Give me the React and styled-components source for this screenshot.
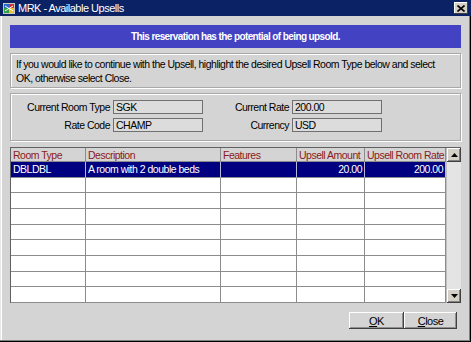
import React from "react";
import styled, { createGlobalStyle } from "styled-components";

const Global = createGlobalStyle`
  html, body { margin: 0; padding: 0; background: #d4d4d4; }
  body { font-family: "Liberation Sans", Arial, sans-serif; font-size: 10.5px; letter-spacing: -0.5px; }
  * { box-sizing: border-box; }
`;

const Window = styled.div`
  width: 471px;
  height: 342px;
  background: #d4d4d4;
  display: flex;
  flex-direction: column;
  padding: 0 10px 0 10px;
  box-shadow: inset -1px -1px 0 #000, inset -2px -2px 0 #808080, inset 1px 0 0 #e8e8e8, inset 2px 0 0 #fff;
  color: #000;
`;

const TitleBar = styled.div`
  height: 16px;
  margin: 0 -10px;
  background: #0b2264;
  display: flex;
  align-items: center;
  padding: 0 3px 0 2px;
  color: #fff;
  font-size: 11px;
`;

const TitleText = styled.span`
  margin-left: 2px;
  flex: 1;
`;

const CloseBox = styled.div`
  width: 14px;
  height: 12px;
  background: #d4d0c8;
  box-shadow: inset -1px -1px 0 #404040, inset 1px 1px 0 #fff;
  display: flex;
  align-items: center;
  justify-content: center;
`;

const Banner = styled.div`
  margin-top: 9px;
  height: 23px;
  background: #4242c2;
  color: #fff;
  font-weight: bold;
  font-size: 10px;
  letter-spacing: -0.6px;
  display: flex;
  align-items: center;
  justify-content: center;
`;

const Panel = styled.div`
  margin-top: ${(p) => p.$gap}px;
  height: ${(p) => p.$h}px;
  border: 1px solid #a8a8a8;
  box-shadow: inset 1px 1px 0 #fff, 1px 1px 0 #fff;
`;

const Instructions = styled(Panel)`
  padding: 3px 5px;
  line-height: 14px;
`;

const InfoGrid = styled(Panel)`
  display: grid;
  grid-template-columns: 99px 90px 83px 90px;
  grid-auto-rows: 14px;
  column-gap: 3px;
  row-gap: 4px;
  padding-top: 6px;
  align-items: center;
`;

const Label = styled.div`
  text-align: right;
  white-space: nowrap;
`;

const Field = styled.div`
  height: 14px;
  border: 1px solid #707070;
  background: #dcdcdc;
  padding: 0 2px;
  line-height: 12px;
`;

const TableWrap = styled.div`
  margin-top: 6px;
  height: 156px;
  display: flex;
  border-top: 1px solid #606060;
  border-left: 1px solid #606060;
`;

const Grid = styled.div`
  flex: 1;
  display: grid;
  grid-template-columns: 75px 135px 76px 68px 81px;
  grid-template-rows: 14px repeat(9, 1fr);
  background: #fff;
`;

const Cell = styled.div`
  border-right: 1px solid #8c8c8c;
  border-bottom: 1px solid #8c8c8c;
  padding: 0 2px;
  display: flex;
  align-items: center;
  justify-content: ${(p) => (p.$right ? "flex-end" : "flex-start")};
  white-space: nowrap;
  overflow: hidden;
  background: ${(p) => (p.$head ? "#d4d4d4" : p.$sel ? "#000080" : "#fff")};
  color: ${(p) => (p.$head ? "#8b1a1a" : p.$sel ? "#fff" : "#000")};
  border-right-color: ${(p) => (p.$sel ? "#b8b8d8" : "#8c8c8c")};
`;

const ScrollBar = styled.div`
  width: 16px;
  display: flex;
  flex-direction: column;
  background: #e4e4e4;
  border-left: 1px solid #c0c0c0;
`;

const Arrow = styled.div`
  height: 14px;
  background: #d4d0c8;
  box-shadow: inset -1px -1px 0 #404040, inset 1px 1px 0 #fff, inset -2px -2px 0 #808080;
  display: flex;
  align-items: center;
  justify-content: center;
`;

const Track = styled.div`
  flex: 1;
`;

const ButtonRow = styled.div`
  margin-top: 9px;
  display: flex;
  justify-content: flex-end;
  padding-right: 4px;
`;

const Button = styled.div`
  width: ${(p) => p.$w}px;
  height: 17px;
  background: #d4d4d4;
  box-shadow: inset -1px -1px 0 #404040, inset 1px 1px 0 #fff, inset -2px -2px 0 #909090;
  display: flex;
  align-items: center;
  justify-content: center;
  font-size: 11px;
  u { text-decoration: underline; }
`;

const Tri = ({ up }) => (
  <svg width="7" height="4" viewBox="0 0 7 4">
    <path d={up ? "M0 4 L3.5 0 L7 4 Z" : "M0 0 L7 0 L3.5 4 Z"} fill="#000" />
  </svg>
);

const AppIcon = () => (
  <svg width="14" height="13" viewBox="0 0 14 13">
    <rect x="1" y="1" width="12" height="11" fill="#c8c8c8" />
    <rect x="2" y="2" width="5" height="4" fill="#2a6acc" />
    <rect x="7" y="2" width="5" height="4" fill="#d43030" />
    <rect x="2" y="6" width="5" height="5" fill="#30a040" />
    <rect x="7" y="6" width="5" height="5" fill="#e8c030" />
    <path d="M3 4 L11 9 M11 4 L3 9" stroke="#fff" strokeWidth="1" />
  </svg>
);

const headers = ["Room Type", "Description", "Features", "Upsell Amount", "Upsell Room Rate"];
const rows = [["DBLDBL", "A room with 2 double beds", "", "20.00", "200.00"]];
while (rows.length < 9) rows.push(["", "", "", "", ""]);

export default function App() {
  return (
    <>
      <Global />
      <Window>
        <TitleBar>
          <AppIcon />
          <TitleText>MRK - Available Upsells</TitleText>
          <CloseBox>
            <svg width="8" height="7" viewBox="0 0 8 7">
              <path d="M0.5 0.5 L7.5 6.5 M7.5 0.5 L0.5 6.5" stroke="#000" strokeWidth="1.6" />
            </svg>
          </CloseBox>
        </TitleBar>
        <Banner>This reservation has the potential of being upsold.</Banner>
        <Instructions $gap={5} $h={35}>
          If you would like to continue with the Upsell, highlight the desired Upsell Room Type below and select
          <br />
          OK, otherwise select Close.
        </Instructions>
        <InfoGrid $gap={5} $h={48}>
          <Label>Current Room Type</Label>
          <Field>SGK</Field>
          <Label>Current Rate</Label>
          <Field>200.00</Field>
          <Label>Rate Code</Label>
          <Field>CHAMP</Field>
          <Label>Currency</Label>
          <Field>USD</Field>
        </InfoGrid>
        <TableWrap>
          <Grid>
            {headers.map((h) => (
              <Cell key={h} $head>
                {h}
              </Cell>
            ))}
            {rows.map((r, i) =>
              r.map((c, j) => (
                <Cell key={i + "-" + j} $sel={i === 0} $right={j >= 3}>
                  {c}
                </Cell>
              ))
            )}
          </Grid>
          <ScrollBar>
            <Arrow>
              <Tri up />
            </Arrow>
            <Track />
            <Arrow>
              <Tri />
            </Arrow>
          </ScrollBar>
        </TableWrap>
        <ButtonRow>
          <Button $w={55}>
            <span>
              <u>O</u>K
            </span>
          </Button>
          <Button $w={53}>
            <span>
              <u>C</u>lose
            </span>
          </Button>
        </ButtonRow>
      </Window>
    </>
  );
}
